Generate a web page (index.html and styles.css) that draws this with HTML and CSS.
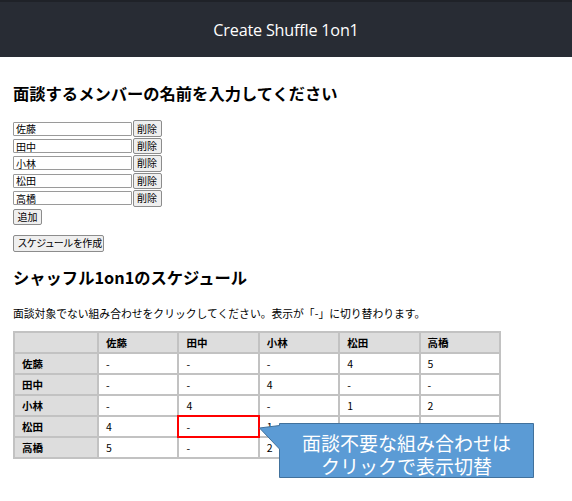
FILE: index.html
```html
<!DOCTYPE html>
<html lang="ja">
<head>
<meta charset="utf-8">
<title>Create Shuffle 1on1</title>
<link rel="stylesheet" href="styles.css">
</head>
<body>
<header class="app-header">
  <h1 class="app-title">Create Shuffle 1on1</h1>
</header>
<main class="content">
  <h2 class="section-title first">面談するメンバーの名前を入力してください</h2>
  <div class="member-list">
    <div class="member-row"><input class="member-input" type="text" value="佐藤"><button class="btn btn-del">削除</button></div>
    <div class="member-row"><input class="member-input" type="text" value="田中"><button class="btn btn-del">削除</button></div>
    <div class="member-row"><input class="member-input" type="text" value="小林"><button class="btn btn-del">削除</button></div>
    <div class="member-row"><input class="member-input" type="text" value="松田"><button class="btn btn-del">削除</button></div>
    <div class="member-row"><input class="member-input" type="text" value="高橋"><button class="btn btn-del">削除</button></div>
  </div>
  <div class="action-row add-row"><button class="btn btn-add">追加</button></div>
  <div class="action-row create-row"><button class="btn btn-create">スケジュールを作成</button></div>

  <h2 class="section-title second">シャッフル1on1のスケジュール</h2>
  <p class="hint">面談対象でない組み合わせをクリックしてください。表示が「-」に切り替わります。</p>

  <div class="schedule-wrap">
    <table class="schedule">
      <thead>
        <tr><th class="corner"></th><th>佐藤</th><th>田中</th><th>小林</th><th>松田</th><th>高橋</th></tr>
      </thead>
      <tbody>
        <tr><th>佐藤</th><td>-</td><td>-</td><td>-</td><td>4</td><td>5</td></tr>
        <tr><th>田中</th><td>-</td><td>-</td><td>4</td><td>-</td><td>-</td></tr>
        <tr><th>小林</th><td>-</td><td>4</td><td>-</td><td>1</td><td>2</td></tr>
        <tr><th>松田</th><td>4</td><td class="highlight">-</td><td>1</td><td>-</td><td>3</td></tr>
        <tr><th>高橋</th><td>5</td><td>-</td><td>2</td><td>3</td><td>-</td></tr>
      </tbody>
    </table>
    <div class="callout">
      <svg class="callout-shape" width="278" height="58" viewBox="0 0 278 58">
        <path d="M21.5,1.5 H275.5 V55.5 H21.5 V27 L1.5,6 L21.5,3.5 Z" fill="#5b9bd5" stroke="#41719c" stroke-width="1"/>
      </svg>
      <div class="callout-text">面談不要な組み合わせは<br>クリックで表示切替</div>
    </div>
  </div>
</main>
</body>
</html>
```
FILE: styles.css
```css
html, body {
  margin: 0;
  padding: 0;
  background: #ffffff;
}

body {
  min-height: 501px;
  font-family: "Noto Sans CJK JP", "Noto Sans", sans-serif;
  color: #000;
}

.app-header {
  height: 55px;
  background: #282c34;
  border-top: 2px solid #1f2228;
  display: flex;
  align-items: center;
  justify-content: center;
}

.app-title {
  margin: 0;
  font-family: "Open Sans", "Noto Sans", sans-serif;
  font-weight: 400;
  font-size: 16.2px;
  color: #ffffff;
  letter-spacing: -0.2px;
}

.content {
  padding-left: 13px;
}

.section-title {
  margin: 0;
  font-size: 16.3px;
  line-height: 20px;
  font-weight: 700;
}

.section-title.first {
  margin-top: 26px;
}

.member-list {
  margin-top: 17px;
  display: flex;
  flex-direction: column;
}

.member-row {
  height: 17.4px;
  display: flex;
  align-items: center;
  gap: 0.5px;
}

.member-input {
  box-sizing: border-box;
  width: 119px;
  height: 14px;
  margin: 0;
  padding: 0 2px;
  border: 1px solid #9a9a9a;
  border-radius: 1px;
  font-family: "Noto Sans CJK JP", sans-serif;
  font-size: 10px;
  line-height: 12px;
  color: #000;
}

.btn {
  box-sizing: border-box;
  margin: 0;
  padding: 0 4px;
  background: #efefef;
  border: 1px solid #8c8c8c;
  border-radius: 2px;
  font-family: "Noto Sans CJK JP", sans-serif;
  font-size: 10px;
  line-height: 12px;
  color: #000;
  white-space: nowrap;
  font-feature-settings: "palt";
}

.btn-del {
  width: 29px;
  height: 16.5px;
  padding: 0;
}

.action-row {
  display: flex;
}

.add-row {
  margin-top: 2px;
}

.btn-add {
  width: 29px;
  height: 16px;
  padding: 0;
}

.create-row {
  margin-top: 10px;
}

.btn-create {
  width: 91px;
  height: 17px;
  padding: 0 4px;
}

.section-title.second {
  margin-top: 15px;
}

.hint {
  margin: 19px 0 0;
  font-size: 10.8px;
  line-height: 14px;
}

.schedule-wrap {
  position: relative;
  margin-top: 11px;
  width: 488px;
}

.schedule {
  width: 488px;
  border-collapse: collapse;
  table-layout: fixed;
  font-size: 10.5px;
}

.schedule th,
.schedule td {
  border: 2px solid #c2c2c2;
  padding: 0 7px;
  height: 19px;
  line-height: 17px;
  text-align: left;
}

.schedule th {
  background: #dddddd;
  font-weight: 700;
}

.schedule th.corner {
  width: 68px;
}

.schedule td {
  background: #ffffff;
  font-weight: 400;
}

.schedule td.highlight {
  outline: 2px solid #ff0000;
  outline-offset: -1px;
}

.callout {
  position: absolute;
  left: 245px;
  top: 91px;
  width: 278px;
  height: 58px;
}

.callout-shape {
  position: absolute;
  left: 0;
  top: 0;
}

.callout-text {
  position: relative;
  margin-left: 21px;
  width: 255px;
  padding-top: 9px;
  text-align: center;
  color: #ffffff;
  font-size: 19px;
  line-height: 23px;
}
```
